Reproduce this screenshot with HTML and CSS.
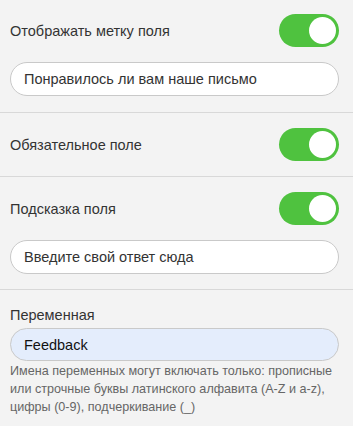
FILE: index.html
```html
<!DOCTYPE html>
<html lang="ru">
<head>
<meta charset="utf-8">
<link rel="stylesheet" href="styles.css">
</head>
<body>
<div class="panel">
  <section class="section first">
    <div class="row">
      <span class="label">Отображать метку поля</span>
      <span class="toggle"><span class="knob"></span></span>
    </div>
    <div class="input">Понравилось ли вам наше письмо</div>
  </section>
  <section class="section">
    <div class="row">
      <span class="label">Обязательное поле</span>
      <span class="toggle"><span class="knob"></span></span>
    </div>
  </section>
  <section class="section">
    <div class="row">
      <span class="label">Подсказка поля</span>
      <span class="toggle"><span class="knob"></span></span>
    </div>
    <div class="input">Введите свой ответ сюда</div>
  </section>
  <section class="section last">
    <div class="var-label">Переменная</div>
    <div class="input var">Feedback</div>
    <p class="help">Имена переменных могут включать только: прописные или строчные буквы латинского алфавита (A-Z и a-z), цифры (0-9), подчеркивание (_)</p>
  </section>
</div>
</body>
</html>
```
FILE: styles.css
```css
html, body {
  margin: 0;
  padding: 0;
  background: #f3f3f3;
}
body {
  font-family: "Liberation Sans", "Noto Sans", Arial, sans-serif;
  color: #333;
}
.panel {
  width: 353px;
}
.section {
  padding: 15px 14px 15px 10px;
  border-bottom: 1px solid #d8d8d8;
  display: flex;
  flex-direction: column;
  gap: 15px;
}
.section.first {
  padding-top: 14px;
  padding-bottom: 16px;
}
.section.last {
  border-bottom: none;
  gap: 0;
}
.row {
  display: flex;
  align-items: center;
  justify-content: space-between;
  height: 33px;
}
.label {
  font-size: 14.5px;
  color: #333;
}
.toggle {
  width: 60px;
  height: 33px;
  border-radius: 17px;
  background: #4fc23f;
  display: flex;
  align-items: center;
  justify-content: flex-end;
  padding-right: 3px;
  box-sizing: border-box;
}
.knob {
  width: 27px;
  height: 27px;
  border-radius: 50%;
  background: #fff;
}
.input {
  height: 34px;
  box-sizing: border-box;
  border: 1px solid #c9c9c9;
  border-radius: 17px;
  background: #fff;
  padding: 0 13px;
  display: flex;
  align-items: center;
  font-size: 14.5px;
  color: #333;
}
.var-label {
  font-size: 14.5px;
  line-height: 20px;
  color: #333;
  margin-bottom: 3px;
}
.input.var {
  height: 33px;
  background: #e4edfc;
  color: #111;
  font-size: 14.5px;
}
.help {
  margin: 1px 0 0;
  font-size: 12.6px;
  line-height: 18px;
  color: #666;
}
```
